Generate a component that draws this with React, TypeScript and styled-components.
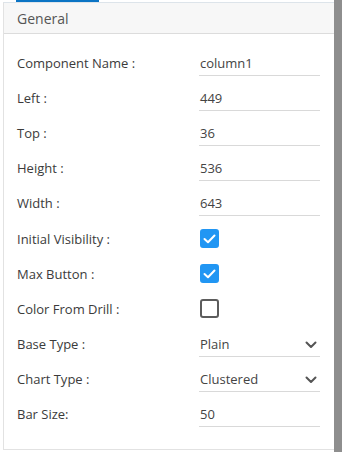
import React from 'react';
import styled, { createGlobalStyle } from 'styled-components';

const GlobalStyle = createGlobalStyle`
  html, body {
    margin: 0;
    padding: 0;
    background: #fff;
  }

  body {
    font-family: "Open Sans", "Liberation Sans", sans-serif;
  }
`;

const Page = styled.div`
  display: flex;
  width: 342px;
  height: 452px;
  padding-left: 3px;
  box-sizing: border-box;
`;

const Column = styled.div`
  display: flex;
  flex-direction: column;
  width: 331px;
`;

const TabMarker = styled.div`
  height: 2px;
  width: 83px;
  margin-left: 13px;
  background-color: #0b74c4;
`;

const Panel = styled.div`
  display: flex;
  flex-direction: column;
  height: 448px;
  border-top: 1px solid #dde4ea;
  border-left: 1px solid #e2e2e2;
  border-bottom: 1px solid #e2e2e2;
  box-sizing: border-box;
`;

const Header = styled.div`
  height: 31px;
  padding-left: 13px;
  display: flex;
  align-items: center;
  background-color: #f7f7f7;
  border-bottom: 1px solid #dcdcdc;
  box-sizing: border-box;
  font-size: 14px;
  color: #555;
`;

const Body = styled.div`
  padding: 11px 13px 0 13px;
`;

const Row = styled.div`
  display: grid;
  grid-template-columns: 182px 121px;
  align-items: center;
  height: 35.2px;
`;

const Label = styled.div`
  font-size: 13px;
  color: #3b3b3b;
`;

const Field = styled.div`
  height: 26px;
  padding: 2px 0 0 1px;
  box-sizing: border-box;
  border-bottom: 1px solid #d9d9d9;
  display: flex;
  align-items: flex-start;
  justify-content: space-between;
  font-size: 13px;
  line-height: 22px;
  color: #444;
`;

const Chevron = styled.svg`
  width: 12px;
  height: 8px;
  margin: 8px 3px 0 0;
`;

const Box = styled.div<{ $checked: boolean }>`
  width: 19px;
  height: 19px;
  box-sizing: border-box;
  border-radius: 3px;
  margin-left: 1px;
  display: flex;
  align-items: center;
  justify-content: center;
  background-color: ${(p) => (p.$checked ? '#2196f3' : '#fff')};
  border: 2px solid ${(p) => (p.$checked ? '#2196f3' : '#5c5c5c')};
`;

const Scrollbar = styled.div`
  width: 8px;
  height: 452px;
  background-color: #8e8e8e;
`;

type Item =
  | { label: string; kind: 'text'; value: string }
  | { label: string; kind: 'select'; value: string }
  | { label: string; kind: 'check'; checked: boolean };

const items: Item[] = [
  { label: 'Component Name :', kind: 'text', value: 'column1' },
  { label: 'Left :', kind: 'text', value: '449' },
  { label: 'Top :', kind: 'text', value: '36' },
  { label: 'Height :', kind: 'text', value: '536' },
  { label: 'Width :', kind: 'text', value: '643' },
  { label: 'Initial Visibility :', kind: 'check', checked: true },
  { label: 'Max Button :', kind: 'check', checked: true },
  { label: 'Color From Drill :', kind: 'check', checked: false },
  { label: 'Base Type :', kind: 'select', value: 'Plain' },
  { label: 'Chart Type :', kind: 'select', value: 'Clustered' },
  { label: 'Bar Size:', kind: 'text', value: '50' },
];

const Checkbox = ({ checked }: { checked: boolean }) => (
  <Box $checked={checked}>
    {checked && (
      <svg width="13" height="10" viewBox="0 0 13 10">
        <path d="M1.5 5 L5 8.3 L11.5 1.5" fill="none" stroke="#fff" strokeWidth="2" strokeLinecap="round" strokeLinejoin="round" />
      </svg>
    )}
  </Box>
);

const App = () => {
  return (
    <Page>
      <GlobalStyle />
      <Column>
        <TabMarker />
        <Panel>
          <Header>General</Header>
          <Body>
            {items.map((item) => (
              <Row key={item.label}>
                <Label>{item.label}</Label>
                {item.kind === 'check' ? (
                  <Checkbox checked={item.checked} />
                ) : (
                  <Field>
                    <span>{item.value}</span>
                    {item.kind === 'select' && (
                      <Chevron viewBox="0 0 12 8">
                        <path d="M1.5 1.5 L6 6 L10.5 1.5" fill="none" stroke="#555" strokeWidth="2" strokeLinecap="round" strokeLinejoin="round" />
                      </Chevron>
                    )}
                  </Field>
                )}
              </Row>
            ))}
          </Body>
        </Panel>
      </Column>
      <Scrollbar />
    </Page>
  );
};

export default App;
